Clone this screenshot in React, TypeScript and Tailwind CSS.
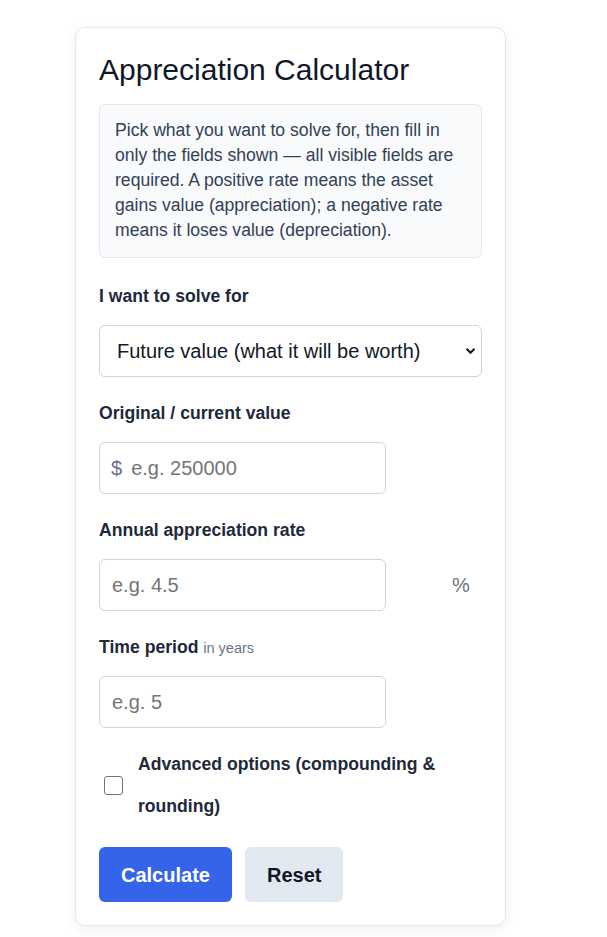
import { useState } from "react";

export default function App() {
  const [advanced, setAdvanced] = useState(false);

  return (
    <div className="min-h-screen bg-white pt-[27px] pl-[75px] font-['Liberation_Sans',Arial,sans-serif]">
      <div className="w-[431px] rounded-[10px] border border-[#e2e8f0] bg-white p-[23px] shadow-[0_4px_14px_rgba(15,23,42,0.06)]">
        <h2 className="mb-[15px] text-[30px] leading-[38px] font-normal text-[#0f172a]">Appreciation Calculator</h2>

        <div className="rounded-[6px] border border-[#e2e8f0] bg-[#f8fafc] px-[15px] pt-[13px] pb-[14px] text-[17.6px] leading-[25px] text-[#334155]">
          Pick what you want to solve for, then fill in only the fields shown — all visible fields are required. A
          positive rate means the asset gains value (appreciation); a negative rate means it loses value
          (depreciation).
        </div>

        <div className="mt-[26px]">
          <label className="block text-[17.6px] leading-[24px] font-bold text-[#1e293b]">I want to solve for</label>
          <div className="relative mt-[17px]">
            <select className="h-[52px] w-full appearance-none rounded-[6px] border border-[#cbd5e1] bg-white pl-[17px] pr-10 text-[20px] text-[#111827] outline-none">
              <option>Future value (what it will be worth)</option>
              <option>Original value</option>
              <option>Appreciation rate</option>
              <option>Time period</option>
            </select>
            <svg
              className="pointer-events-none absolute top-[22px] right-[6px]"
              width="11"
              height="8"
              viewBox="0 0 11 8"
              fill="none"
            >
              <path d="M1.5 1.8 5.5 5.8 9.5 1.8" stroke="#111827" strokeWidth="2" />
            </svg>
          </div>
        </div>

        <div className="mt-[24px]">
          <label className="block text-[17.6px] leading-[24px] font-bold text-[#1e293b]">Original / current value</label>
          <div className="mt-[17px] flex h-[52px] w-[287px] items-center rounded-[6px] border border-[#cbd5e1] bg-white pl-[11px]">
            <span className="text-[20px] text-[#64748b]">$</span>
            <input
              className="ml-[9px] w-full bg-transparent text-[20px] text-[#111827] outline-none placeholder:text-[#757575]"
              placeholder="e.g. 250000"
            />
          </div>
        </div>

        <div className="mt-[24px]">
          <label className="block text-[17.6px] leading-[24px] font-bold text-[#1e293b]">Annual appreciation rate</label>
          <div className="mt-[17px] flex items-center">
            <input
              className="h-[52px] w-[287px] rounded-[6px] border border-[#cbd5e1] bg-white px-[12px] text-[20px] text-[#111827] outline-none placeholder:text-[#757575]"
              placeholder="e.g. 4.5"
            />
            <span className="ml-[66px] text-[20px] text-[#6b7280]">%</span>
          </div>
        </div>

        <div className="mt-[24px]">
          <label className="block text-[17.6px] leading-[24px] font-bold text-[#1e293b]">
            Time period <span className="text-[14.5px] font-normal text-[#64748b]">in years</span>
          </label>
          <input
            className="mt-[16px] h-[52px] w-[287px] rounded-[6px] border border-[#cbd5e1] bg-white px-[12px] text-[20px] text-[#111827] outline-none placeholder:text-[#757575]"
            placeholder="e.g. 5"
          />
        </div>

        <label className="mt-[15px] flex cursor-pointer items-center">
          <span
            onClick={() => setAdvanced(!advanced)}
            className={`ml-[5px] h-[19px] w-[19px] shrink-0 rounded-[3px] border-[1.5px] border-[#767676] ${
              advanced ? "bg-[#2f62e6]" : "bg-white"
            }`}
          />
          <span className="ml-[15px] text-[17.6px] leading-[42px] font-bold text-[#1e293b]">
            Advanced options (compounding &amp; rounding)
          </span>
        </label>

        <div className="mt-[20px] flex gap-[13px]">
          <button className="h-[55px] rounded-[6px] bg-[#3563e9] px-[22px] text-[20px] font-bold text-white">
            Calculate
          </button>
          <button className="h-[55px] rounded-[6px] bg-[#e2e8f0] px-[22px] text-[20px] font-bold text-[#0f172a]">
            Reset
          </button>
        </div>
      </div>
    </div>
  );
}
